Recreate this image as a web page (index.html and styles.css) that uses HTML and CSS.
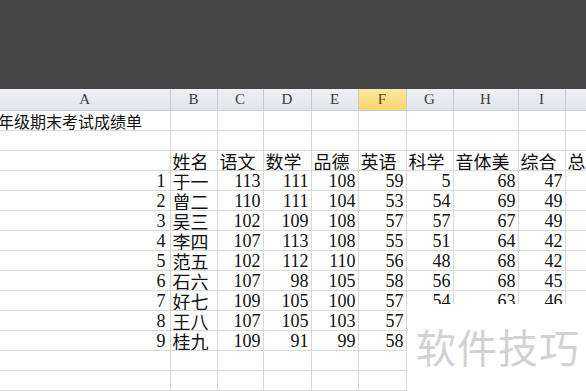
FILE: index.html
```html
<!DOCTYPE html>
<html>
<head>
<meta charset="utf-8">
<link rel="stylesheet" href="styles.css">
</head>
<body>
<div class="topbar"></div>
<div class="sheet">
<table class="grid">
<colgroup>
<col class="ca"><col class="cb"><col class="cc"><col class="cd"><col class="ce"><col class="cf"><col class="cg"><col class="ch"><col class="ci"><col class="cj">
</colgroup>
<tr class="hdr"><th>A</th><th>B</th><th>C</th><th>D</th><th>E</th><th class="sel">F</th><th>G</th><th>H</th><th>I</th><th>J</th></tr>
<tr><td class="title">年级期末考试成绩单</td><td></td><td></td><td></td><td></td><td></td><td></td><td></td><td></td><td></td></tr>
<tr><td></td><td></td><td></td><td></td><td></td><td></td><td></td><td></td><td></td><td></td></tr>
<tr><td></td><td class="t">姓名</td><td class="t">语文</td><td class="t">数学</td><td class="t">品德</td><td class="t">英语</td><td class="t">科学</td><td class="t">音体美</td><td class="t">综合</td><td class="t">总分</td></tr>
<tr><td class="n">1</td><td class="t">于一</td><td class="n">113</td><td class="n">111</td><td class="n">108</td><td class="n">59</td><td class="n">5</td><td class="n">68</td><td class="n">47</td><td class="n">5</td></tr>
<tr><td class="n">2</td><td class="t">曾二</td><td class="n">110</td><td class="n">111</td><td class="n">104</td><td class="n">53</td><td class="n">54</td><td class="n">69</td><td class="n">49</td><td class="n">5</td></tr>
<tr><td class="n">3</td><td class="t">吴三</td><td class="n">102</td><td class="n">109</td><td class="n">108</td><td class="n">57</td><td class="n">57</td><td class="n">67</td><td class="n">49</td><td class="n">5</td></tr>
<tr><td class="n">4</td><td class="t">李四</td><td class="n">107</td><td class="n">113</td><td class="n">108</td><td class="n">55</td><td class="n">51</td><td class="n">64</td><td class="n">42</td><td class="n">5</td></tr>
<tr><td class="n">5</td><td class="t">范五</td><td class="n">102</td><td class="n">112</td><td class="n">110</td><td class="n">56</td><td class="n">48</td><td class="n">68</td><td class="n">42</td><td class="n">5</td></tr>
<tr><td class="n">6</td><td class="t">石六</td><td class="n">107</td><td class="n">98</td><td class="n">105</td><td class="n">58</td><td class="n">56</td><td class="n">68</td><td class="n">45</td><td class="n">5</td></tr>
<tr><td class="n">7</td><td class="t">好七</td><td class="n">109</td><td class="n">105</td><td class="n">100</td><td class="n">57</td><td class="n">54</td><td class="n">63</td><td class="n">46</td><td class="n">5</td></tr>
<tr><td class="n">8</td><td class="t">王八</td><td class="n">107</td><td class="n">105</td><td class="n">103</td><td class="n">57</td><td></td><td></td><td></td><td></td></tr>
<tr><td class="n">9</td><td class="t">桂九</td><td class="n">109</td><td class="n">91</td><td class="n">99</td><td class="n">58</td><td></td><td></td><td></td><td></td></tr>
<tr><td></td><td></td><td></td><td></td><td></td><td></td><td></td><td></td><td></td><td></td></tr>
<tr><td></td><td></td><td></td><td></td><td></td><td></td><td></td><td></td><td></td><td></td></tr>
</table>
<div class="watermark">软件技巧</div>
</div>
</body>
</html>
```

FILE: styles.css
```css
html, body {
  margin: 0;
  padding: 0;
  background: #ffffff;
  overflow: hidden;
  width: 586px;
  height: 391px;
}

.topbar {
  height: 89px;
  background: #454545;
}

.sheet {
  position: relative;
  height: 302px;
  overflow: hidden;
}

.grid {
  border-collapse: collapse;
  table-layout: fixed;
  width: 640px;
  font-family: "Liberation Serif", "Noto Sans CJK SC", serif;
  font-size: 18px;
  color: #111111;
}

.ca { width: 170px; }
.cb { width: 47px; }
.cc { width: 46px; }
.cd { width: 48px; }
.ce { width: 47px; }
.cf { width: 48px; }
.cg { width: 47px; }
.ch { width: 65px; }
.ci { width: 47px; }
.cj { width: 75px; }

.grid td {
  border-right: 1px solid #d9d9d9;
  border-bottom: 1px solid #d9d9d9;
  padding: 0 2px;
  line-height: 18px;
  height: 20px;
  box-sizing: border-box;
  white-space: nowrap;
  overflow: hidden;
  vertical-align: bottom;
}

.hdr th {
  height: 21px;
  box-sizing: border-box;
  padding: 0;
  font-weight: normal;
  font-size: 15px;
  line-height: 18px;
  color: #3c3c3c;
  background: linear-gradient(#eef0f3, #e1e5eb);
  border-right: 1px solid #c6cbd2;
  border-bottom: 1px solid #c6cbd2;
  text-align: center;
}

.hdr th.sel {
  background: linear-gradient(#fce7a1, #f8d66d);
  color: #5a4414;
}

.title {
  font-family: "Noto Sans CJK SC", sans-serif;
  font-size: 16px;
  text-indent: -4px;
  overflow: visible;
}

.t {
  font-family: "Noto Sans CJK SC", sans-serif;
  text-align: left;
}

.n {
  text-align: right;
}

.grid td.n:first-child { padding-right: 4px; }

.watermark {
  position: absolute;
  left: 407px;
  top: 215px;
  width: 179px;
  height: 87px;
  background: #ffffff;
  box-sizing: border-box;
  padding: 21px 0 0 9px;
  font-family: "Noto Sans CJK SC", sans-serif;
  font-size: 40px;
  line-height: 42px;
  letter-spacing: 1px;
  color: #d2d2d2;
  white-space: nowrap;
  overflow: hidden;
}
```
